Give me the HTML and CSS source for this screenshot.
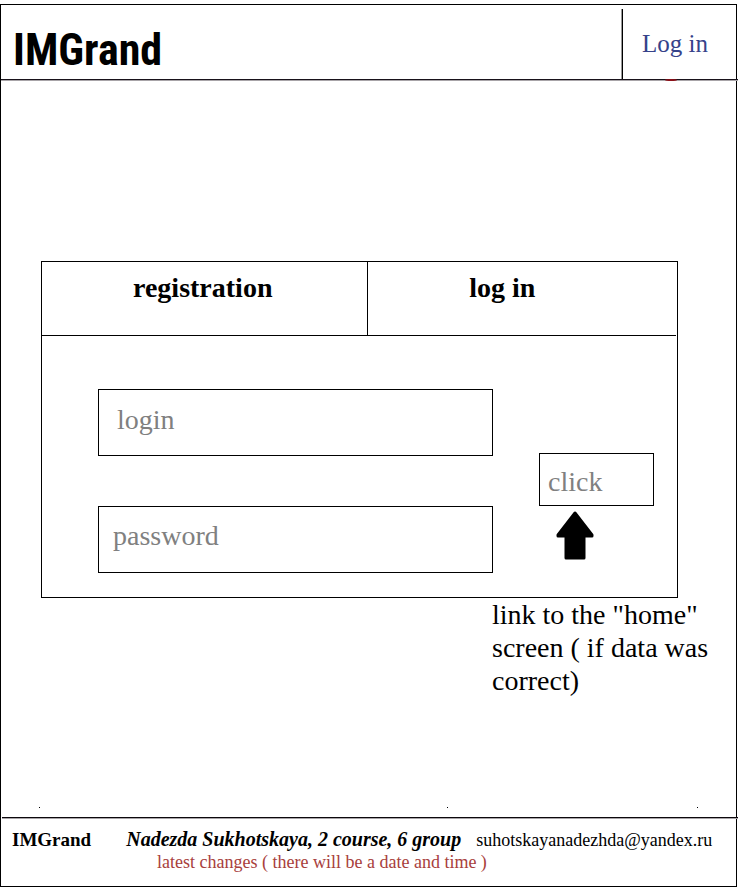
FILE: index.html
```html
<!DOCTYPE html>
<html lang="en">
<head>
<meta charset="utf-8">
<title>IMGrand</title>
<link rel="stylesheet" href="styles.css">
</head>
<body>
<div class="frame">
  <header class="header">
    <h1 class="logo">IMGrand</h1>
    <nav class="account"><a class="account-link" href="#login">Log in</a></nav>
  </header>
  <main class="main">
    <section class="panel">
      <div class="tabs">
        <button class="tab" type="button">registration</button>
        <button class="tab tab-login" type="button">log in</button>
      </div>
      <form class="form">
        <div class="fields">
          <input class="field field-login" type="text" placeholder="login" aria-label="login">
          <input class="field field-password" type="password" placeholder="password" aria-label="password">
        </div>
        <div class="action">
          <button class="submit" type="button">click</button>
          <svg class="arrow" viewBox="0 0 38 50" aria-hidden="true"><path d="M19 3 36 25V26H28V48H10V26H2V25Z" fill="#000" stroke="#000" stroke-width="3" stroke-linejoin="round"/></svg>
        </div>
      </form>
    </section>
    <p class="note">link to the "home" screen ( if data was correct)</p>
  </main>
  <div class="marks" aria-hidden="true"><i></i><i></i><i></i></div>
  <footer class="footer">
    <div class="credits">
      <strong class="brand">IMGrand</strong>
      <strong class="author">Nadezda Sukhotskaya, 2 course, 6 group</strong>
      <a class="email" href="mailto:suhotskayanadezhda@yandex.ru">suhotskayanadezhda@yandex.ru</a>
    </div>
    <p class="changes">latest changes ( there will be a date and time )</p>
  </footer>
</div>
</body>
</html>
```
FILE: styles.css
```css
* { box-sizing: border-box; }

body {
  margin: 0;
  background: #fff;
  color: #000;
  font-family: "Liberation Serif", "Times New Roman", serif;
  font-size: 28px;
}

h1, p { margin: 0; font-weight: normal; }
a { color: inherit; text-decoration: none; }
button, input {
  font: inherit;
  color: inherit;
  background: none;
  border: 0;
  border-radius: 0;
  margin: 0;
}

.frame {
  display: flex;
  flex-direction: column;
  min-height: calc(100vh - 4px);
  margin: 4px 2px 0 0;
  border: 1px solid #000;
}

.header {
  position: relative;
  display: flex;
  justify-content: space-between;
  height: 75px;
  margin-right: -2px;
  padding-top: 4px;
  border-bottom: 1px solid #18121a;
  box-shadow: 0 1px #a8a4a8;
}

.header::after {
  content: "";
  position: absolute;
  right: 61px;
  bottom: -2px;
  width: 12px;
  height: 2px;
  border-radius: 50%;
  background: #8c1018;
}

.logo {
  padding: 17px 0 0 12px;
  font: bold 44px/48px "Roboto Condensed", Roboto, sans-serif;
}

.account {
  width: 116px;
  padding: 20px 0 0 19px;
  border-left: 1px solid #000;
  box-shadow: -1px 0 #999;
  font-size: 25px;
  line-height: 30px;
  color: #36428a;
}

.main { flex: 1; }

.panel {
  margin: 181px 58px 0 40px;
  border: 1px solid #000;
}

.tabs {
  display: grid;
  grid-template-columns: 326fr 309fr;
  margin-right: 1px;
  border-bottom: 1px solid #000;
}

.tab {
  padding: 10px 4px 31px 0;
  font-weight: bold;
  line-height: 32px;
}

.tab-login { padding-right: 40px; border-left: 1px solid #000; }

.form {
  display: grid;
  grid-template-columns: 1fr 115px;
  gap: 46px;
  padding: 53px 23px 24px 56px;
}

.fields { display: grid; gap: 50px; }

.field {
  width: 100%;
  height: 67px;
  padding: 0 14px 8px;
  border: 1px solid #000;
}

.field-login { padding-left: 18px; padding-bottom: 6px; }
.field::placeholder { color: #808080; opacity: 1; }

.action { padding-top: 64px; }

.submit {
  display: block;
  width: 100%;
  height: 53px;
  padding: 4px 8px 0;
  border: 1px solid #000;
  color: #808080;
  text-align: left;
}

.arrow {
  display: block;
  width: 38px;
  height: 50px;
  margin: 4px 0 0 17px;
}

.note {
  width: 244px;
  margin-left: auto;
  line-height: 33px;
}

.marks {
  display: grid;
  grid-template-columns: 408fr 250fr 1px;
  margin: 0 38px 9px;
}

.marks i { width: 1px; height: 1px; background: #000; }

.footer {
  margin: 0 -2px 0 1px;
  padding: 10px 10px 13px;
  border-top: 1px solid #0c080c;
  box-shadow: inset 0 1px #a8a4a8;
  font-size: 18px;
  line-height: 22px;
}

.credits { display: flex; align-items: baseline; }
.brand { font-size: 19px; }
.author { margin-left: 35px; font-size: 20px; font-style: italic; }
.email { margin-left: 15px; }
.changes { padding-left: 145px; color: #a8403c; }
```
